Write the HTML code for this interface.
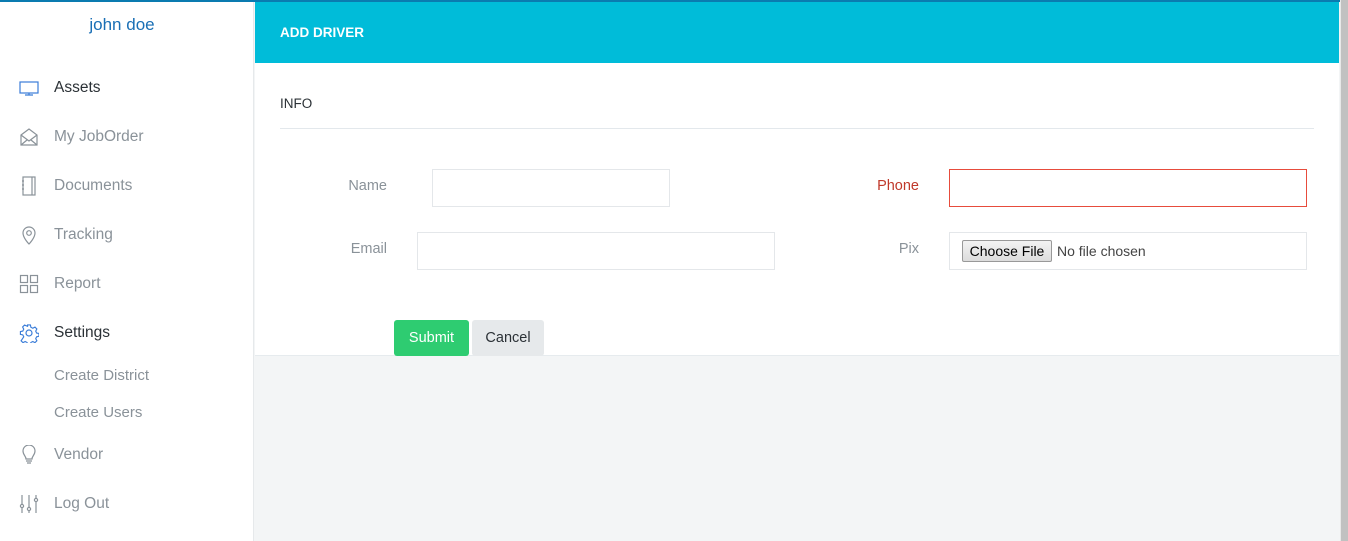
<!DOCTYPE html>
<html><head><meta charset="utf-8"><style>
*{box-sizing:border-box;margin:0;padding:0}
body{width:1348px;height:541px;overflow:hidden;background:#f3f5f6;font-family:"Liberation Sans",sans-serif;position:relative}
.abs{position:absolute}
.top{left:0;top:0;width:1348px;height:2px;background:#0a7bb0}
.side{left:0;top:2px;width:254px;height:539px;background:#fff;border-right:1px solid #e6e9eb}
.name{left:0;top:15px;width:244px;text-align:center;color:#1a6fb5;font-size:17px}
.item{left:54px;font-size:15.5px;color:#8a9299}
.item.dk{color:#2b3136}
.sub{left:54px;font-size:15px;color:#8a9299}
.ic{left:19px;width:20px;height:20px}
.main{left:255px;top:2px;width:1084px;height:354px;background:#fff;border-bottom:1px solid #e6ebee}
.hdr{left:255px;top:2px;width:1084px;height:61px;background:#00bcd9}
.hdr span{position:absolute;left:25px;top:23px;color:#fff;font-weight:bold;font-size:13.5px}
.info{left:280px;top:96px;font-size:13.5px;color:#2b3136}
.hr{left:280px;top:128px;width:1034px;height:1px;background:#e3e8ec}
.lbl{font-size:14.5px;color:#8a9299;text-align:right}
.inp{border:1px solid #e4e7ea;background:#fff;height:38px}
.scroll{left:1340px;top:0;width:8px;height:541px;background:#c1c1c1;border-left:1px solid #e8e8e8}
</style></head><body>
<div class="abs top"></div>
<div class="abs side"></div>
<div class="abs name">john doe</div>
<svg class="abs ic" style="top:78px" viewBox="0 0 20 20" fill="none" stroke="#3b7dd8" stroke-width="1.2"><rect x="1" y="4" width="18" height="11"/><path d="M10 15v2M6 17h8"/></svg>
<div class="abs item dk" style="top:79px">Assets</div>
<svg class="abs ic" style="top:127px" viewBox="0 0 20 20" fill="none" stroke="#8a9299" stroke-width="1.2"><path d="M2 8l8-6 8 6v10H2z"/><path d="M2 8l8 6 8-6M2 18l6-5M18 18l-6-5"/></svg>
<div class="abs item" style="top:128px">My JobOrder</div>
<svg class="abs ic" style="top:176px" viewBox="0 0 20 20" fill="none" stroke="#8a9299" stroke-width="1.2"><rect x="4" y="1" width="12" height="18"/><path d="M13 1v18M3 5h2M3 9h2M3 13h2"/></svg>
<div class="abs item" style="top:177px">Documents</div>
<svg class="abs ic" style="top:225px" viewBox="0 0 20 20" fill="none" stroke="#8a9299" stroke-width="1.2"><path d="M10 19s-6-6-6-11a6 6 0 0112 0c0 5-6 11-6 11z"/><circle cx="10" cy="8" r="2.3"/></svg>
<div class="abs item" style="top:226px">Tracking</div>
<svg class="abs ic" style="top:274px" viewBox="0 0 20 20" fill="none" stroke="#8a9299" stroke-width="1.2"><rect x="1.5" y="1.5" width="7" height="7"/><rect x="11.5" y="1.5" width="7" height="7"/><rect x="1.5" y="11.5" width="7" height="7"/><rect x="11.5" y="11.5" width="7" height="7"/></svg>
<div class="abs item" style="top:275px">Report</div>
<svg class="abs ic" style="top:323px" viewBox="0 0 20 20" fill="none" stroke="#3b7dd8" stroke-width="1.2"><circle cx="10" cy="10" r="3"/><path d="M8.5 1.5h3l.5 2.5 2 1 2.3-1.2 2 2-1.2 2.3 1 2 2.4.4v3l-2.4.5-1 2 1.2 2.2-2 2-2.3-1.2-2 1-.5 2.5h-3l-.5-2.5-2-1-2.3 1.2-2-2L4.5 14l-1-2L1 11.5v-3l2.5-.5 1-2-1.2-2.3 2-2L8.5 3z" transform="scale(.95) translate(.5 .5)"/></svg>
<div class="abs item dk" style="top:324px">Settings</div>
<div class="abs sub" style="top:367px">Create District</div>
<div class="abs sub" style="top:404px">Create Users</div>
<svg class="abs ic" style="top:445px" viewBox="0 0 20 20" fill="none" stroke="#8a9299" stroke-width="1.2"><path d="M7 14c0-3-3-4-3-8a6 6 0 0112 0c0 4-3 5-3 8z"/><path d="M7 16h6M8 18h4"/></svg>
<div class="abs item" style="top:446px">Vendor</div>
<svg class="abs ic" style="top:494px" viewBox="0 0 20 20" fill="none" stroke="#8a9299" stroke-width="1.2"><path d="M3 1v18M10 1v18M17 1v18"/><circle cx="3" cy="12" r="1.6" fill="#fff"/><circle cx="10" cy="15" r="1.6" fill="#fff"/><circle cx="17" cy="6" r="1.6" fill="#fff"/></svg>
<div class="abs item" style="top:495px">Log Out</div>

<div class="abs main"></div>
<div class="abs hdr"><span>ADD DRIVER</span></div>
<div class="abs info">INFO</div>
<div class="abs hr"></div>

<div class="abs lbl" style="left:300px;top:178px;width:87px">Name</div>
<div class="abs inp" style="left:432px;top:169px;width:238px"></div>
<div class="abs lbl" style="left:300px;top:241px;width:87px">Email</div>
<div class="abs inp" style="left:417px;top:232px;width:358px"></div>
<div class="abs lbl" style="left:820px;top:178px;width:99px;color:#c0392b">Phone</div>
<div class="abs inp" style="left:949px;top:169px;width:358px;border-color:#e74c3c"></div>
<div class="abs lbl" style="left:820px;top:241px;width:99px">Pix</div>
<div class="abs inp" style="left:949px;top:232px;width:358px"></div>
<div class="abs" style="left:962px;top:240px;width:90px;height:22px;border:1px solid #999;border-radius:2px;background:linear-gradient(#f3f3f3,#dcdcdc);font-size:14px;color:#000;text-align:center;line-height:20px">Choose File</div>
<div class="abs" style="left:1057px;top:243px;font-size:14px;color:#444">No file chosen</div>

<div class="abs" style="left:394px;top:320px;width:75px;height:36px;background:#2ecc71;border-radius:3px;color:#fff;font-size:14.5px;text-align:center;line-height:36px">Submit</div>
<div class="abs" style="left:472px;top:320px;width:72px;height:36px;background:#e6e9eb;border-radius:3px;color:#2b3136;font-size:14.5px;text-align:center;line-height:36px">Cancel</div>
<div class="abs scroll"></div>
</body></html>
